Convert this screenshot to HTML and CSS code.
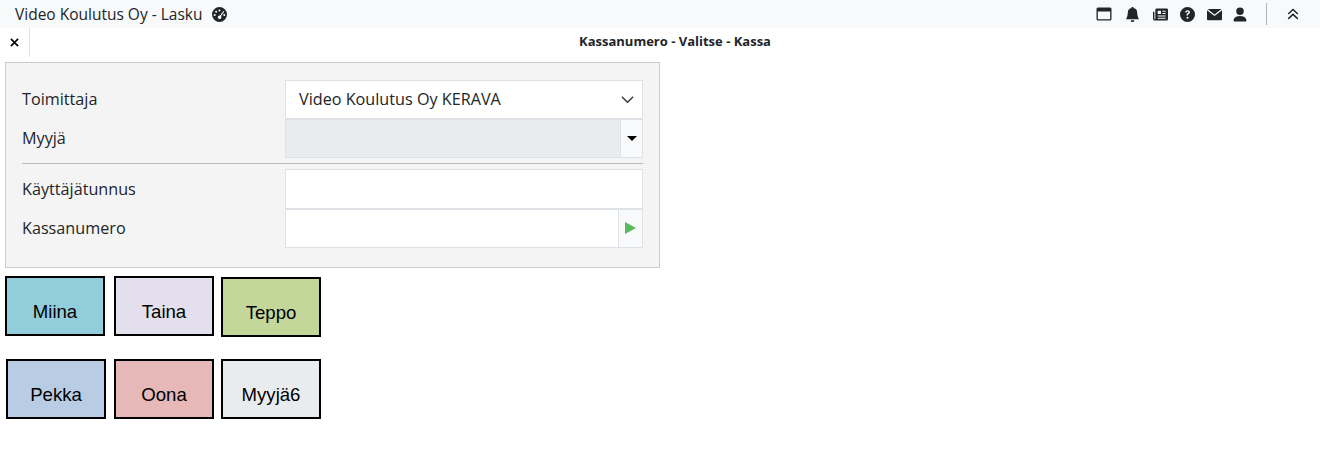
FILE: index.html
```html
<!DOCTYPE html>
<html lang="fi">
<head>
<meta charset="utf-8">
<title>Video Koulutus Oy - Lasku</title>
<link rel="stylesheet" href="styles.css">
</head>
<body>
<header class="topbar">
  <div class="brand">
    <span class="brand-title">Video Koulutus Oy - Lasku</span>
    <svg class="brand-icon" viewBox="0 0 16 16" width="15" height="15"><path fill="#212529" fill-rule="evenodd" d="M8 0a8 8 0 1 0 0 16A8 8 0 0 0 8 0ZM8 2.600a1.100 1.100 0 1 1 0 2.200 1.100 1.100 0 0 1 0-2.200ZM4.400 4a1.100 1.100 0 1 1 0 2.200 1.100 1.100 0 0 1 0-2.200ZM2.900 7.400a1.100 1.100 0 1 1 0 2.200 1.100 1.100 0 0 1 0-2.200ZM13.100 7.400a1.100 1.100 0 1 1 0 2.200 1.100 1.100 0 0 1 0-2.200ZM12.300 4.300l.9.700-3.600 4.600a1.900 1.900 0 1 1-3 .100 2 2 0 0 1 2-.600Z"/></svg>
  </div>
  <div class="tools">
    <svg class="tool tool-window" viewBox="0 0 16 16" width="16" height="16"><path fill="#212529" fill-rule="evenodd" d="M2 1.500h12A1.500 1.500 0 0 1 15.500 3v10a1.500 1.500 0 0 1-1.500 1.500H2A1.500 1.500 0 0 1 .5 13V3A1.500 1.500 0 0 1 2 1.500ZM1.800 5.500V13c0 .1.100.200.200.200h12c.100 0 .200-.100.200-.200V5.500Z"/></svg>
    <svg class="tool tool-bell" viewBox="0 0 16 16" width="15" height="15"><path fill="#212529" d="M8 16a2 2 0 0 0 2-2H6a2 2 0 0 0 2 2Zm.9-14.900a1 1 0 1 0-1.800 0A5 5 0 0 0 3 6c0 1-.5 5-2 7h14c-1.500-2-2-6-2-7a5 5 0 0 0-4.100-4.900Z"/></svg>
    <svg class="tool tool-news" viewBox="0 0 16 16" width="15" height="15"><path fill="#212529" fill-rule="evenodd" d="M4 1.500h10.500A1.500 1.500 0 0 1 16 3v10a1.500 1.500 0 0 1-1.500 1.500H2A2 2 0 0 1 0 12.500V5h1.500v7.500a.5.5 0 0 0 1 0V3A1.500 1.500 0 0 1 4 1.500ZM5 4v3.500h3.500V4Zm5 0v1h3.500V4Zm0 2.500v1h3.500v-1ZM5 9v1h8.500V9Zm0 2.500v1h8.500v-1Z"/></svg>
    <svg class="tool" viewBox="0 0 16 16" width="15" height="15"><path fill="#212529" fill-rule="evenodd" d="M8 0a8 8 0 1 0 0 16A8 8 0 0 0 8 0ZM5.500 5.900C5.600 4.400 6.700 3.500 8.100 3.500c1.500 0 2.500.9 2.500 2.100 0 .9-.4 1.400-1.200 1.900-.7.400-.9.700-.9 1.300v.3H7v-.5c0-.9.300-1.400 1.100-1.900.6-.4.800-.7.800-1.100 0-.5-.4-.8-.9-.8s-.9.300-1 1ZM8 10.300a1.100 1.100 0 1 1 0 2.200 1.100 1.100 0 0 1 0-2.200Z"/></svg>
    <svg class="tool tool-mail" viewBox="0 0 16 16" width="15" height="15"><path fill="#212529" d="M.6 2h14.800L8 7.900.6 2ZM0 3.400l8 6.300 8-6.300V13a1 1 0 0 1-1 1H1a1 1 0 0 1-1-1V3.400Z"/></svg>
    <svg class="tool tool-last" viewBox="1.500 1.500 13 14" width="14" height="15"><path fill="#212529" d="M3 15s-1 0-1-1 1-4 6-4 6 3 6 4-1 1-1 1H3Zm5-6a3.500 3.500 0 1 0 0-7 3.500 3.500 0 0 0 0 7Z"/></svg>
    <span class="tools-sep"></span>
    <svg class="tool-collapse" viewBox="0 0 16 16" width="14" height="14"><path fill="none" stroke="#212529" stroke-width="1.700" d="M2.500 8 8 2.800 13.500 8M2.500 13.600 8 8.400l5.500 5.200"/></svg>
  </div>
</header>

<div class="subbar">
  <div class="close-cell"><svg viewBox="0 0 10 10" width="9" height="9"><path stroke="#000" stroke-width="1.800" d="M1 1l8 8M9 1l-8 8"/></svg></div>
  <div class="subbar-title">Kassanumero - Valitse - Kassa</div>
</div>

<form class="panel">
  <div class="row">
    <label class="row-label">Toimittaja</label>
    <div class="control select-control">
      <span class="select-value">Video Koulutus Oy KERAVA</span>
      <svg viewBox="0 0 16 16" width="15" height="15"><path fill="none" stroke="#343a40" stroke-width="1.600" stroke-linecap="round" stroke-linejoin="round" d="M2.500 5.500 8 11l5.500-5.500"/></svg>
    </div>
  </div>
  <div class="row">
    <label class="row-label">Myyjä</label>
    <div class="control group">
      <div class="group-input disabled"></div>
      <div class="addon addon-narrow"><span class="caret"></span></div>
    </div>
  </div>
  <div class="divider"></div>
  <div class="row row-tall">
    <label class="row-label">Käyttäjätunnus</label>
    <div class="control"></div>
  </div>
  <div class="row">
    <label class="row-label">Kassanumero</label>
    <div class="control group">
      <div class="group-input"></div>
      <div class="addon addon-wide"><span class="play"></span></div>
    </div>
  </div>
</form>

<div class="tiles tiles-first">
  <button type="button" class="tile tile-miina">Miina</button>
  <button type="button" class="tile tile-taina">Taina</button>
  <button type="button" class="tile tile-teppo">Teppo</button>
</div>
<div class="tiles tiles-second">
  <button type="button" class="tile tile-pekka">Pekka</button>
  <button type="button" class="tile tile-oona">Oona</button>
  <button type="button" class="tile tile-myyja">Myyjä6</button>
</div>
</body>
</html>
```

FILE: styles.css
```css
* { box-sizing: border-box; }

html, body { margin: 0; padding: 0; }

body {
  background: #fff;
  color: #212529;
  font-family: "Open Sans", sans-serif;
  font-size: 16.200px;
  height: 460px;
  overflow: hidden;
}

.topbar {
  display: flex;
  align-items: center;
  justify-content: space-between;
  height: 28px;
  background: #f8f9fa;
  padding: 0 20px 0 15px;
}

.brand { display: flex; align-items: center; gap: 10px; }
.brand-title { line-height: 28px; font-size: 15.500px; }
.brand-icon { display: block; }

.tools { display: flex; align-items: center; }
.tool { display: block; margin-right: 12px; }
.tool-window { margin-right: 13px; }
.tool-bell { margin-right: 13px; }
.tool-news { margin-right: 12px; }
.tool-mail { margin-right: 11px; }
.tool-last { margin-right: 0; }
.tools-sep {
  width: 1px;
  height: 22px;
  background: #adb5bd;
  margin: 0 19px 0 19px;
}
.tool-collapse { display: block; }

.subbar { display: flex; height: 29px; }
.close-cell {
  width: 30px;
  border-right: 1px solid #dee2e6;
  display: flex;
  align-items: center;
  justify-content: center;
}
.subbar-title {
  flex: 1;
  text-align: center;
  font-size: 13px;
  font-weight: 700;
  line-height: 26px;
}

.panel {
  width: 655px;
  height: 206px;
  margin: 5px 0 0 5px;
  padding: 17px 16px 0;
  background: #f4f4f4;
  border: 1px solid #ccc;
}

.row { display: flex; height: 39px; }
.row-tall { height: 40px; }

.row-label {
  width: 263px;
  line-height: 38px;
  color: #212529;
}
.row-tall .row-label { line-height: 40px; }

.control {
  width: 358px;
  background: #fff;
  border: 1px solid #dee2e6;
}

.select-control {
  display: flex;
  align-items: center;
  justify-content: space-between;
  padding: 0 7px 0 13px;
}
.select-value { margin-bottom: 2px; }

.group { display: flex; }
.group-input { flex: 1; }
.group-input.disabled { background: #e9ecef; }

.addon {
  display: flex;
  align-items: center;
  justify-content: center;
  background: #f8f9fa;
  border-left: 1px solid #dee2e6;
}
.addon-narrow { width: 22px; }
.addon-wide { width: 24px; }

.caret {
  width: 0;
  height: 0;
  border-left: 5px solid transparent;
  border-right: 5px solid transparent;
  border-top: 5px solid #000;
}
.play {
  width: 0;
  height: 0;
  margin-bottom: 1px;
  border-top: 6px solid transparent;
  border-bottom: 6px solid transparent;
  border-left: 11px solid #5cb85c;
}

.divider {
  height: 1px;
  background: #bbb;
  margin: 5px 0;
  width: 621px;
}

.tiles { display: flex; align-items: flex-start; }
.tiles-first { margin: 8px 0 0 5px; }
.tiles-second { margin: 22px 0 0 6px; }

.tile {
  width: 100px;
  height: 60px;
  margin: 0;
  padding: 11px 0 0;
  border: 2px solid #000;
  border-radius: 0;
  color: #000;
  font-family: "Liberation Sans", Arial, sans-serif;
  font-size: 18.600px;
}
.tile-miina { background: #92cddc; }
.tile-taina { background: #e4dfec; margin-left: 9px; }
.tile-teppo { background: #c4d79b; margin: 1px 0 0 7px; }
.tile-pekka { background: #b8cce4; }
.tile-oona { background: #e6b8b7; margin-left: 8px; }
.tile-myyja { background: #e9ecef; margin-left: 7px; }
```
